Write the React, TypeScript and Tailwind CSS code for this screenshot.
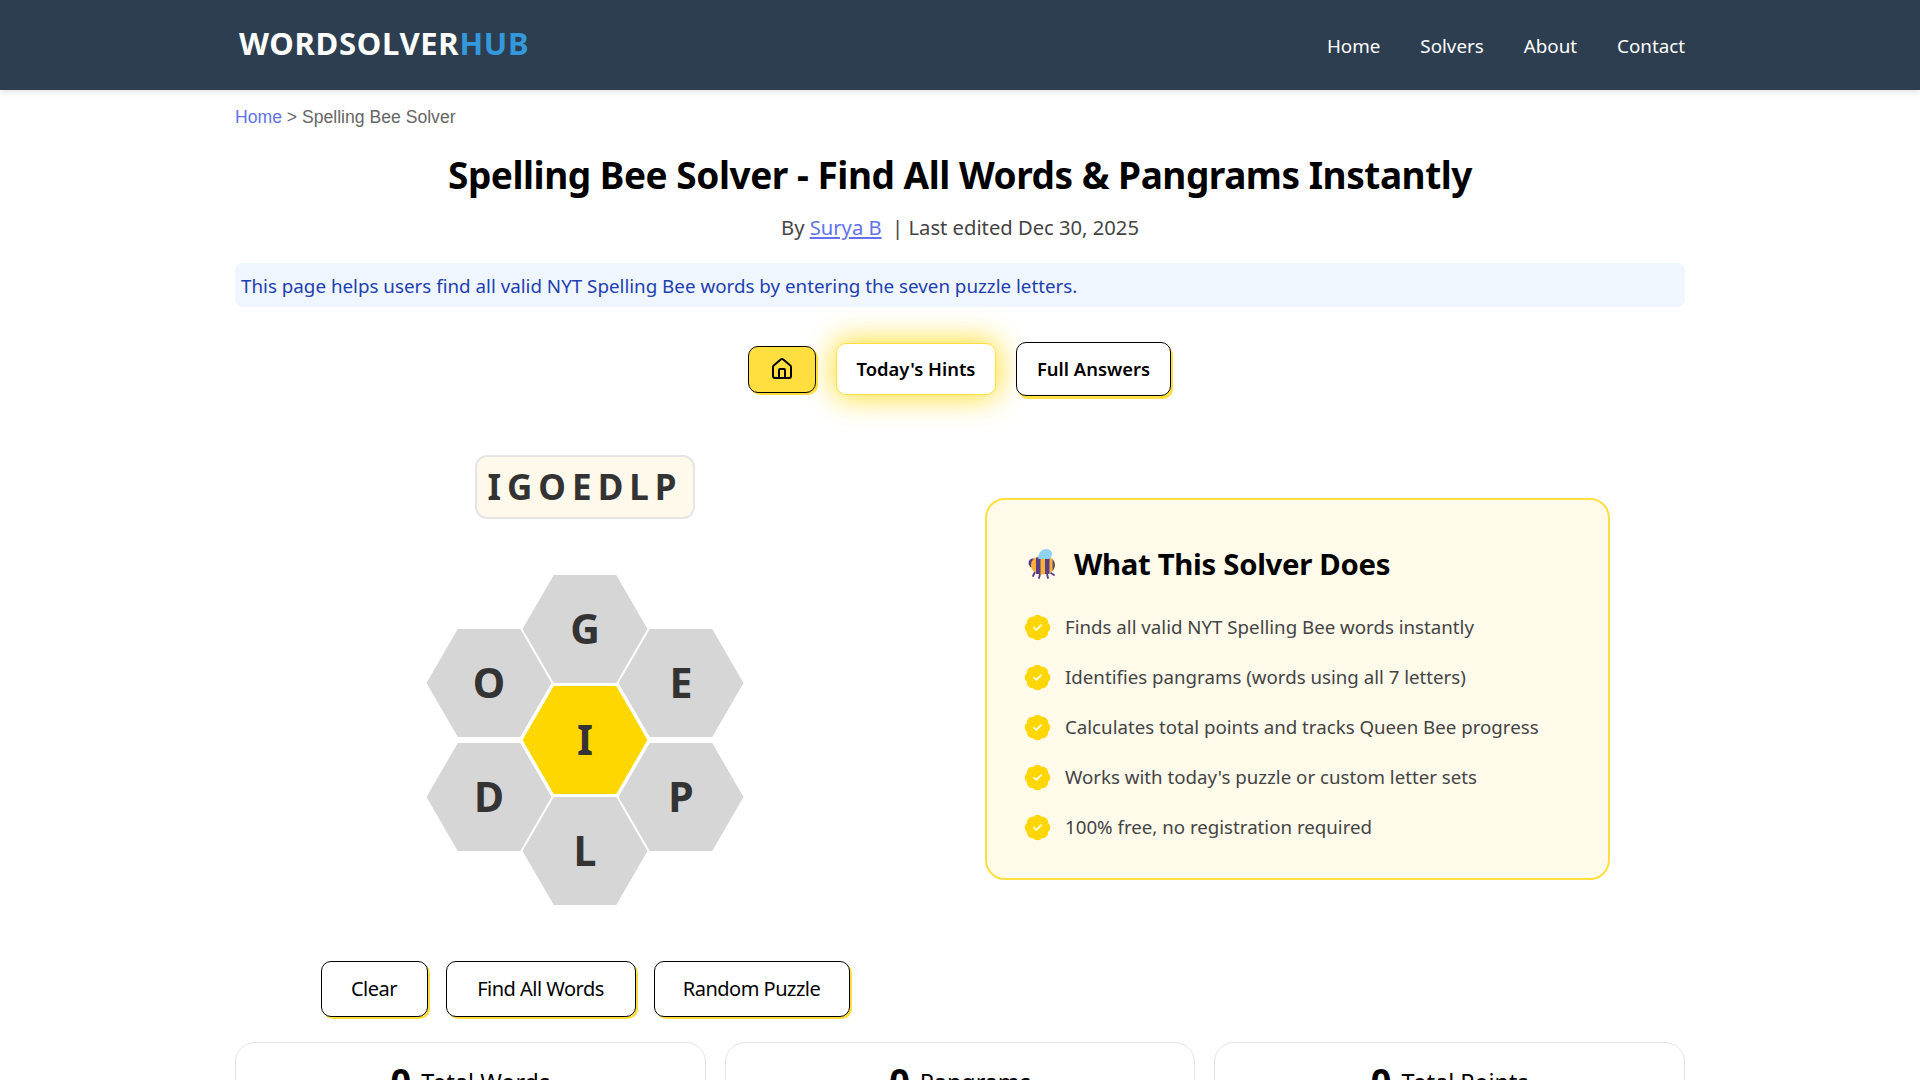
import { House } from 'lucide-react';

const navLinks = ['Home', 'Solvers', 'About', 'Contact'];

const features = [
  'Finds all valid NYT Spelling Bee words instantly',
  'Identifies pangrams (words using all 7 letters)',
  'Calculates total points and tracks Queen Bee progress',
  "Works with today's puzzle or custom letter sets",
  '100% free, no registration required',
];

const stats = ['Total Words', 'Pangrams', 'Total Points'];

function Hex({ letter, className }: { letter: string; className: string }) {
  return (
    <div
      className={`absolute flex h-[108px] w-[125px] items-center justify-center text-[41px] font-bold text-[#333] [clip-path:polygon(25%_0,75%_0,100%_50%,75%_100%,25%_100%,0_50%)] ${className}`}
    >
      {letter}
    </div>
  );
}

function BeeIcon() {
  return (
    <svg viewBox="0 0 32 32" className="h-[32px] w-[32px] shrink-0">
      <path d="M8 24l-2 4M13 26l-1 4M20 26l1 4M24 25l3 2" stroke="#5b3a8c" strokeWidth="1.8" strokeLinecap="round" />
      <circle cx="6" cy="15" r="4.5" fill="#5b3a8c" />
      <ellipse cx="16" cy="17" rx="12" ry="9.5" fill="#f9b233" />
      <path d="M9 9.5h4.5v16.5H9zM18 8h4.5v18H18z" fill="#5a3f86" />
      <path d="M25.5 11a11 11 0 0 1 2.5 6 11 11 0 0 1-2.5 6z" fill="#5a4a6e" />
      <path d="M11 10c0-5 4-9 8-9s6 3 6 5c0 3-2 5-4 5h-7c-2 0-3-.5-3-1z" fill="#8fd3f4" />
    </svg>
  );
}

function CheckBadge() {
  return (
    <svg viewBox="0 0 24 24" className="h-[29px] w-[29px] shrink-0">
      <path
        d="M3.85 8.62a4 4 0 0 1 4.78-4.77 4 4 0 0 1 6.74 0 4 4 0 0 1 4.78 4.78 4 4 0 0 1 0 6.74 4 4 0 0 1-4.77 4.78 4 4 0 0 1-6.75 0 4 4 0 0 1-4.78-4.77 4 4 0 0 1 0-6.76Z"
        fill="#ffd700"
        stroke="#ffd700"
        strokeWidth="1.2"
      />
      <path d="m9 12 2 2 4-4" fill="none" stroke="#fff" strokeWidth="1.3" strokeLinecap="round" strokeLinejoin="round" />
    </svg>
  );
}

export default function App() {
  return (
    <div className="h-[1080px] overflow-hidden bg-white font-['Noto_Sans',sans-serif] text-black">
      <header className="h-[90px] bg-[#2c3e50] shadow-[0_2px_6px_rgba(0,0,0,0.12)]">
        <div className="mx-auto flex h-full w-[1450px] items-center justify-between">
          <div className="pb-[3px] pl-1 text-[31px] font-bold leading-none tracking-[0.7px] text-white">
            WORDSOLVER<span className="text-[#3498db]">HUB</span>
          </div>
          <nav className="flex gap-10 pt-[3px] text-[18.8px] text-white">
            {navLinks.map((link) => (
              <a key={link}>{link}</a>
            ))}
          </nav>
        </div>
      </header>

      <main className="mx-auto w-[1450px]">
        <div className="pt-[15px] font-['Liberation_Sans',sans-serif] text-[17.6px] leading-[24px] text-[#666]">
          <a className="text-[#6272ee]">Home</a> &gt; Spelling Bee Solver
        </div>

        <h1 className="mt-5 text-center text-[37px] font-bold leading-[52px] tracking-[-0.47px]">
          Spelling Bee Solver - Find All Words &amp; Pangrams Instantly
        </h1>
        <p className="mt-[13px] text-center text-[20.2px] leading-[27px] text-[#444]">
          By <a className="text-[#6272ee] underline">Surya B</a> &nbsp;| Last edited Dec 30, 2025
        </p>

        <div className="mt-[22px] flex h-[44px] items-center rounded-lg bg-[#eff6ff] px-[6px] pt-[2px] text-[18.8px] text-[#1e40af]">
          This page helps users find all valid NYT Spelling Bee words by entering the seven puzzle letters.
        </div>

        <div className="mt-[35px] flex items-center justify-center gap-5">
          <button className="-ml-[1px] flex h-[47px] w-[68px] items-center justify-center rounded-[10px] border border-black bg-[#ffdf40] shadow-[2px_2px_0_#ffdf40]">
            <House size={24} strokeWidth={2} />
          </button>
          <button className="h-[52px] w-[160px] rounded-[10px] border border-[#ffdf40] bg-white text-[18.4px] font-semibold shadow-[0_0_30px_2px_rgba(255,215,0,0.85)]">
            Today's Hints
          </button>
          <button className="h-[54px] w-[155px] rounded-[10px] border border-black bg-white text-[18.4px] font-semibold shadow-[2px_3px_0_#ffdf40]">
            Full Answers
          </button>
        </div>

        <div className="mt-[59px] grid grid-cols-[700px_625px] gap-[50px]">
          <div className="flex flex-col items-center">
            <div className="flex h-[64px] w-[220px] items-center justify-center rounded-xl border-2 border-[#e5e5e5] bg-[#fff9ec] text-[35px] font-bold tracking-[6px] text-[#333]">
              IGOEDLP
            </div>

            <div className="relative mt-[56px] h-[330px] w-[317px]">
              <Hex letter="G" className="left-[96px] top-0 bg-[#d6d6d6]" />
              <Hex letter="O" className="left-0 top-[54px] bg-[#d6d6d6]" />
              <Hex letter="E" className="left-[192px] top-[54px] bg-[#d6d6d6]" />
              <Hex letter="I" className="left-[96px] top-[111px] bg-[#ffd700]" />
              <Hex letter="D" className="left-0 top-[168px] bg-[#d6d6d6]" />
              <Hex letter="P" className="left-[192px] top-[168px] bg-[#d6d6d6]" />
              <Hex letter="L" className="left-[96px] top-[222px] bg-[#d6d6d6]" />
            </div>

            <div className="mt-[56px] flex gap-[18px] text-[20px] tracking-[-0.5px]">
              <button className="h-[56px] w-[107px] rounded-[10px] border border-black bg-white shadow-[2px_2px_0_#ffdf40]">Clear</button>
              <button className="h-[56px] w-[190px] rounded-[10px] border border-black bg-white shadow-[2px_2px_0_#ffdf40]">Find All Words</button>
              <button className="h-[56px] w-[196px] rounded-[10px] border border-black bg-white shadow-[2px_2px_0_#ffdf40]">Random Puzzle</button>
            </div>
          </div>

          <div className="mt-[43px] h-[382px] rounded-[20px] border-2 border-[#ffdf40] bg-[#fffaea] pl-[36px] pr-10 pt-[44px]">
            <div className="flex items-center gap-[15px] pl-[4px]">
              <BeeIcon />
              <h2 className="text-[29.3px] font-bold leading-[40px] tracking-[-0.3px]">What This Solver Does</h2>
            </div>
            <ul className="mt-[18px] flex flex-col">
              {features.map((feature) => (
                <li key={feature} className="flex h-[50px] items-center gap-[13px] text-[18.7px] text-[#444]">
                  <CheckBadge />
                  {feature}
                </li>
              ))}
            </ul>
          </div>
        </div>

        <div className="mt-[25px] grid grid-cols-3 gap-[19px]">
          {stats.map((stat) => (
            <div key={stat} className="flex h-[120px] items-start justify-center gap-[10px] rounded-[20px] border border-[#e5e5e5] bg-white pt-[14px]">
              <span className="text-[36px] font-bold leading-[50px]">0</span>
              <span className="mt-[5px] text-[23.3px] leading-[40px]">{stat}</span>
            </div>
          ))}
        </div>
      </main>
    </div>
  );
}
